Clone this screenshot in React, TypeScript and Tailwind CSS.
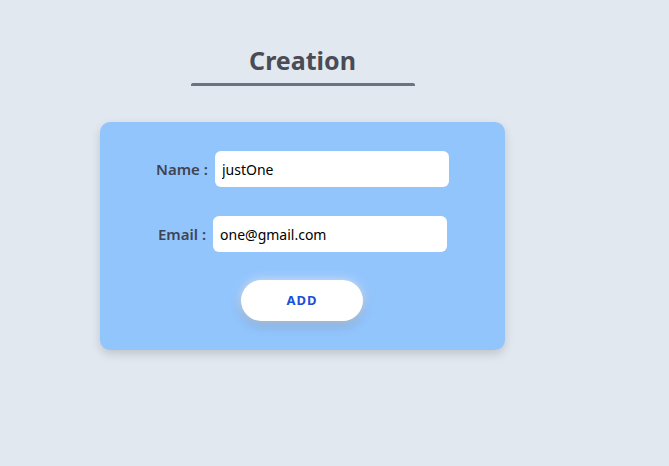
export default function App() {
  return (
    <div className="min-h-[466px] w-full bg-[#e2e8f0] font-['Noto_Sans',sans-serif]">
      <div className="ml-[100px] w-[405px] pt-[43px]">
        <div className="flex flex-col items-center">
          <h1 className="text-[25px] font-bold leading-[34px] text-[#4b4b55]">Creation</h1>
          <div className="mt-[6px] h-[3px] w-[224px] rounded-t-[2px] bg-[#6b7280]" />
        </div>
        <div className="mt-[36px] flex h-[228px] flex-col items-center rounded-[10px] bg-[#93c5fd] pt-[29px] shadow-[0_4px_10px_rgba(0,0,0,0.15)]">
          <div className="flex items-center gap-[7px]">
            <span className="text-[15px] font-semibold text-[#3f4454]">Name :</span>
            <input
              readOnly
              value="justOne"
              className="h-[36px] w-[234px] rounded-[6px] bg-white px-[7px] text-[14px] text-black outline-none"
            />
          </div>
          <div className="mt-[29px] flex items-center gap-[7px]">
            <span className="text-[15px] font-semibold text-[#3f4454]">Email :</span>
            <input
              readOnly
              value="one@gmail.com"
              className="h-[36px] w-[234px] rounded-[6px] bg-white px-[7px] text-[14px] text-black outline-none"
            />
          </div>
          <button className="mt-[28px] mr-[1px] h-[41px] w-[122px] rounded-full bg-white text-[13px] font-bold tracking-[1px] text-[#1d4ed8] shadow-[0_4px_12px_rgba(0,0,0,0.2),0_0_10px_rgba(255,255,255,0.8)]">
            ADD
          </button>
        </div>
      </div>
    </div>
  );
}
